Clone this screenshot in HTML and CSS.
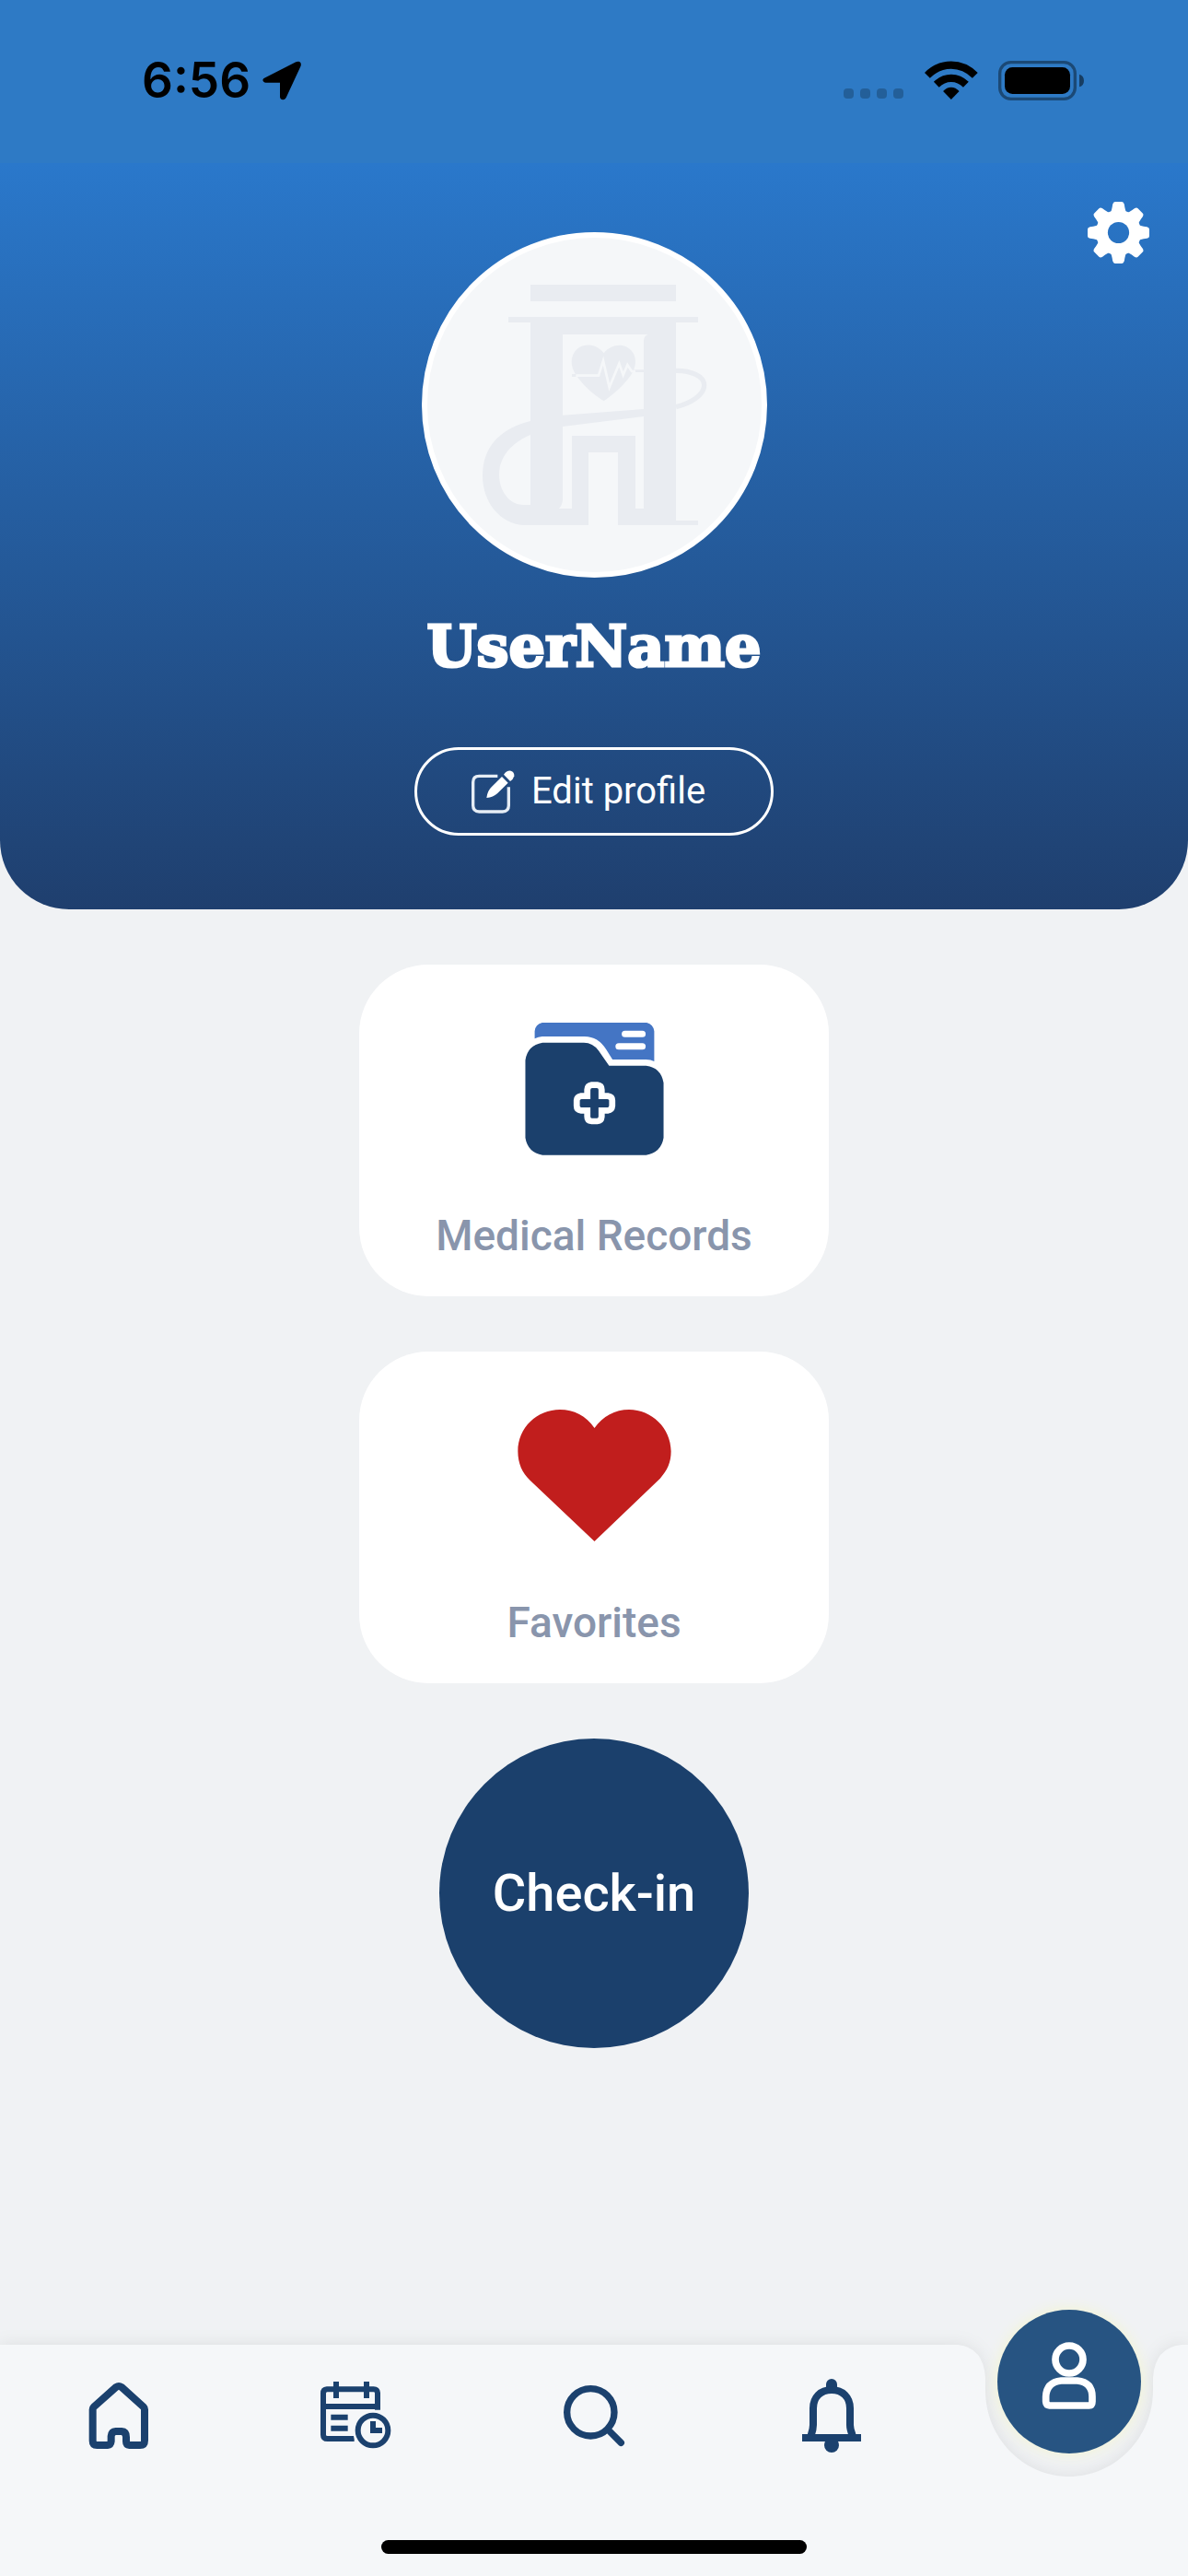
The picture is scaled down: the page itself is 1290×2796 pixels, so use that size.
FILE: index.html
```html
<!DOCTYPE html>
<html lang="en">
<head>
<meta charset="utf-8">
<meta name="viewport" content="width=device-width, initial-scale=1">
<title>Profile</title>
<link rel="stylesheet" href="styles.css">
</head>
<body>
<header class="hero">
  <div class="status">
    <span class="time">6:56</span>
    <svg class="location" viewBox="461 80 126 129" aria-hidden="true"><path d="M470 135 L570 84 Q580 80 585 86 Q588 91 585 99 L538 200 Q534 207 528 207 Q518 206 518 197 L518 151 L472 151 Q463 150 462 142 Q463 137 470 135 Z"/></svg>
    <svg class="signal" viewBox="0 0 66 42" aria-hidden="true"><g fill-opacity=".22"><rect x="0" y="30" width="11" height="11" rx="4"/><rect x="18" y="30" width="11" height="11" rx="4"/><rect x="36" y="30" width="11" height="11" rx="4"/><rect x="54" y="30" width="11" height="11" rx="4"/></g></svg>
    <svg class="wifi" viewBox="371 75 174 127" aria-hidden="true"><g fill="none" stroke="#000" stroke-width="25"><path d="M379 123 Q413 89 457.500 89 Q502 89 536 123"/><path d="M409 153 Q430 132 457.500 132 Q485 132 506 153"/></g><path d="M431 175 Q443 162 457.500 162 Q472 162 484 175 L457.500 202 Z"/></svg>
    <svg class="battery" viewBox="612 75 279 129" aria-hidden="true"><rect x="617" y="80" width="245" height="119" rx="36" fill="none" stroke="#000" stroke-opacity=".4" stroke-width="10"/><rect x="633" y="96" width="213" height="87" rx="25"/><path d="M876 119 Q891 124 891 140 Q891 155 876 160 Z" fill-opacity=".5"/></svg>
  </div>
  <div class="profile">
    <div class="avatar" role="img" aria-label="Profile picture">
      <svg viewBox="72 54 1089 1089">
        <g fill="#e9ecf1">
          <path d="M408 207H882V261H408ZM336 312H954V330H882V975H954V990H693V753H597V990H385C310 985 252 915 252 830C252 735 310 675 408 651V330H336ZM513 369V632L777 612V390Q778 374 791 369ZM408 696C345 722 306 770 306 825C306 880 340 924 385 924H408ZM513 669V910Q510 929 500 936H543V699H750V936H777V636Z" fill-rule="evenodd"/>
          <path d="M647 430C620 395 580 400 562 415C535 438 538 475 556 500C577 532 610 562 647 586C690 555 720 525 738 497C760 460 750 425 722 410C697 398 666 406 647 430Z"/>
          <path d="M543 498H562V507H543ZM744 484H777V492H741Z"/>
        </g>
        <path d="M882 487C930 486 974 505 974 534C974 566 930 594 882 605" fill="none" stroke="#e9ecf1" stroke-width="16"/>
        <path d="M556 503H630L645 455L665 541L697 464L710 501L724 468L738 489H750" fill="none" stroke="#f5f7f9" stroke-width="8"/>
      </svg>
    </div>
    <button class="settings" type="button" aria-label="Settings">
      <svg viewBox="-101 -101 202 202"><defs><path id="tooth" d="M-29 -60 Q-22 -70 -19 -93 Q-17 -101 -11 -101 H11 Q17 -101 19 -93 Q22 -70 29 -60 V0 H-29Z"/></defs><mask id="hub"><rect x="-101" y="-101" width="202" height="202" fill="#fff"/><circle r="35" fill="#000"/></mask><g fill="#fff" mask="url(#hub)"><circle r="74"/><use href="#tooth"/><use href="#tooth" transform="rotate(45)"/><use href="#tooth" transform="rotate(90)"/><use href="#tooth" transform="rotate(135)"/><use href="#tooth" transform="rotate(180)"/><use href="#tooth" transform="rotate(225)"/><use href="#tooth" transform="rotate(270)"/><use href="#tooth" transform="rotate(315)"/></g></svg>
    </button>
  </div>
  <h1 class="name">UserName</h1>
  <button class="edit" type="button">
    <svg viewBox="247 588 141 141" aria-hidden="true"><path d="M332 607H272Q252 607 252 627V703Q252 723 272 723H348Q368 723 368 703V643" fill="none" stroke="#e6edf5" stroke-width="10"/><path d="M296 678Q299 655 312 643L346 609L366 629L331 664Q318 676 296 678Z" fill="#fff"/><path d="M352 602Q362 588 375 590Q387 594 386 607Q383 618 373 624Z" fill="#fff"/></svg>
    <span>Edit profile</span>
  </button>
</header>

<main class="actions">
  <a class="card" href="#records">
    <svg viewBox="534 240 500 432" preserveAspectRatio="none" aria-hidden="true">
      <path d="M592 292V268Q594 245 616 240H952Q973 245 976 268V366Q965 360 950 360H842L822 328Q796 285 752 285H616Q604 286 592 292Z" fill="#4475c4"/>
      <path d="M882 277H938M862 317H938" stroke="#fff" stroke-width="21" stroke-linecap="round"/>
      <path d="M617 305H750Q779 305 797 331L831 380H950Q998 386 1006 436V615Q998 663 950 671H617Q570 663 562 615V362Q569 313 617 305Z" fill="#1b406c"/>
      <path d="M775 443H793Q807 445 807 458V479H827Q841 481 841 493V511Q840 525 827 526H807V546Q806 560 793 561H775Q761 560 761 546V526H741Q727 525 727 511V493Q728 481 741 479H761V458Q762 445 775 443Z" fill="none" stroke="#fff" stroke-width="20"/>
    </svg>
    <span>Medical Records</span>
  </a>
  <a class="card" href="#favorites">
    <svg viewBox="534 240 500 432" preserveAspectRatio="none" aria-hidden="true"><path d="M784 300C757 260 718 240 673 240C600 240 538 298 538 376C538 415 552 447 577 470L784 669L995 464C1018 438 1030 412 1030 376C1029 300 968 240 895 240C850 240 811 261 784 300Z" fill="#c11e1d"/></svg>
    <span>Favorites</span>
  </a>
  <button class="checkin" type="button">Check-in</button>
</main>

<nav class="tabs" aria-label="Main">
  <div class="tabs-bg" aria-hidden="true">
    <span class="fill-left"></span>
    <svg viewBox="0 0 258 251"><path d="M0 0H8Q36 3 38 36V50C38 100 78 143 129 143C180 143 220 100 220 50V36Q222 3 251 0H258V251H0Z" fill="#f5f7f9"/></svg>
    <span class="fill-right"></span>
  </div>
  <div class="tab-row">
    <a class="tab" href="#home" aria-label="Home"><svg viewBox="3 48 288 288"><path d="M138 93Q147 87 156 93L227 157Q231 161 231 166V266Q231 282 216 282H182Q171 281 171 270V256Q171 238 156 237H137Q123 238 122 253V269Q121 281 110 282H76Q62 282 62 268V166Q62 161 66 157Z" fill="none" stroke="#1b416e" stroke-width="24"/></svg></a>
    <a class="tab" href="#appointments" aria-label="Appointments"><svg viewBox="777 48 288 288"><g fill="none" stroke="#1b416e" stroke-width="18"><path d="M990 167V112Q989 100 977 100H825Q813 101 813 113V248Q813 261 827 261H914M813 156H998M855 75V129M954 75V129M838 191H893M838 227H893"/></g><circle cx="975" cy="234" r="66" fill="#f5f7f9"/><circle cx="975" cy="234" r="49" fill="none" stroke="#1b416e" stroke-width="18"/><path d="M975 204V234H1005" fill="none" stroke="#1b416e" stroke-width="18"/></svg></a>
    <a class="tab" href="#search" aria-label="Search"><svg viewBox="21 48 288 288"><g fill="none" stroke="#1b416e" stroke-width="22"><circle cx="154" cy="175" r="77"/><path d="M213 234L253 274" stroke-linecap="round"/></g></svg></a>
    <a class="tab" href="#notifications" aria-label="Notifications"><svg viewBox="795 48 288 288"><path d="M843 246H1035V270H843ZM921 100V84A18 18 0 0 1 957 84V100Z" fill="#1b416e"/><circle cx="939" cy="282" r="24" fill="#1b416e"/><path d="M872 250Q879 230 879 216V162C879 126 903 102 939 102C975 102 999 126 999 162V216Q999 230 1007 250" fill="none" stroke="#1b416e" stroke-width="24"/></svg></a>
    <a class="tab" href="#profile" aria-label="Profile" aria-current="page"><span class="bubble"><svg viewBox="129 51 468 468"><g fill="none" stroke="#fff" stroke-width="23"><circle cx="363" cy="213" r="45"/><path d="M337 282H389Q438 287 438 334V350Q438 362 427 363H299Q288 362 287 350V334Q289 287 337 282Z"/></g></svg></span></a>
  </div>
  <div class="home-indicator"></div>
</nav>
</body>
</html>
```
FILE: styles.css
```css
* {
  box-sizing: border-box;
}

body {
  margin: 0;
  min-height: 100vh;
  display: flex;
  flex-direction: column;
  background: #f0f2f4;
  font-family: Roboto, "Liberation Sans", sans-serif;
}

button {
  border: 0;
  padding: 0;
  background: none;
  color: inherit;
  font: inherit;
  cursor: pointer;
}

a {
  color: inherit;
  text-decoration: none;
}

svg {
  display: block;
  flex: none;
}

/* Header */
.hero {
  display: flex;
  flex-direction: column;
  align-items: center;
  padding-bottom: 80px;
  border-radius: 0 0 75px 75px;
  background: linear-gradient(#2a78cb, #1f3f6e) 0 177px / 100% calc(100% - 177px) no-repeat #2e7ac5;
  color: #fff;
  overflow: hidden;
}

.status {
  align-self: stretch;
  display: flex;
  align-items: center;
  height: 177px;
  padding: 0 113px 3px 154px;
  color: #000;
}

.time {
  font-family: Inter, "Liberation Sans", sans-serif;
  font-size: 53px;
  font-weight: 600;
  line-height: 60px;
}

.location {
  width: 42px;
  height: 43px;
  margin-left: 13px;
}

.signal {
  width: 66px;
  height: 42px;
  margin-left: auto;
}

.wifi {
  width: 58px;
  height: 42px;
  margin-left: 22px;
}

.battery {
  width: 93px;
  height: 43px;
  margin-left: 22px;
}

.profile {
  align-self: stretch;
  display: grid;
  grid-template-columns: 1fr auto 1fr;
  align-items: start;
  padding: 42px 42px 0;
}

.avatar {
  grid-column: 2;
  width: 375px;
  height: 375px;
  margin-top: 33px;
  border: 6px solid #fff;
  border-radius: 50%;
  background: #f5f7f9;
}

.settings {
  justify-self: end;
}

.settings svg {
  width: 67px;
  height: 67px;
}

.name {
  margin: 45px 0 79px;
  font-family: "DejaVu Serif", serif;
  font-size: 62px;
  font-weight: 700;
  line-height: 60px;
  -webkit-text-stroke: 3px #fff;
}

.edit {
  display: flex;
  align-items: center;
  gap: 18px;
  width: 390px;
  height: 96px;
  padding-left: 59px;
  border: 3px solid #fff;
  border-radius: 48px;
  font-size: 40px;
  line-height: 48px;
}

.edit svg {
  width: 47px;
  height: 47px;
}

/* Actions */
.actions {
  flex: 1;
  display: flex;
  flex-direction: column;
  align-items: center;
  gap: 60px;
  padding: 60px 24px;
}

.card {
  display: flex;
  flex-direction: column;
  align-items: center;
  justify-content: space-between;
  width: 510px;
  height: 360px;
  padding: 63px 24px 36px;
  border-radius: 75px;
  background: #fff;
  color: #8995ac;
  font-size: 46px;
  font-weight: 500;
  line-height: 60px;
}

.card svg {
  width: 169px;
  height: 144px;
}

.checkin {
  width: 336px;
  height: 336px;
  border-radius: 50%;
  background: #1b406c;
  color: #fff;
  font-size: 56px;
  font-weight: 500;
}

/* Bottom navigation */
.tabs {
  position: relative;
  flex: none;
}

.tabs-bg {
  position: absolute;
  inset: 0;
  display: flex;
  filter: drop-shadow(0 0 9px rgba(0, 0, 0, .08));
}

.tabs-bg svg {
  width: 258px;
  height: 251px;
}

.fill-left {
  width: calc(90% - 129px);
  background: #f5f7f9;
}

.fill-right {
  flex: 1;
  background: #f5f7f9;
}

.tab-row {
  position: relative;
  display: grid;
  grid-template-columns: repeat(5, 1fr);
  height: 212px;
}

.tab {
  display: flex;
  justify-content: center;
  align-items: flex-start;
  padding-top: 31px;
}

.tab svg {
  width: 96px;
  height: 96px;
}

.bubble {
  margin-top: -69px;
  border-radius: 50%;
  background: #275482;
  box-shadow: 0 0 15px #f3f5cf;
}

.tab .bubble svg {
  width: 156px;
  height: 156px;
}

.home-indicator {
  position: relative;
  width: 462px;
  height: 15px;
  margin: 0 auto 24px;
  border-radius: 8px;
  background: #000;
}
```
